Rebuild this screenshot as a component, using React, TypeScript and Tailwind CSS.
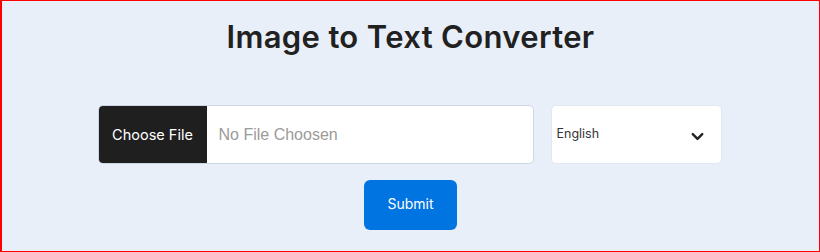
import React, { useState } from 'react';
import { ChevronDown } from 'lucide-react';

const App: React.FC = () => {
  const [language, setLanguage] = useState('English');

  return (
    <div className="w-[820px] h-[252px] box-border border border-l-2 border-[#ff0000] bg-[#e9eff8] flex flex-col items-center">
      {/* Title */}
      <h1 className="mt-[16px] text-[31px] leading-[40px] font-semibold text-[#212121] font-['Inter',sans-serif] tracking-[0.35px]">
        Image to Text Converter
      </h1>

      {/* Input row */}
      <div className="mt-[48px] -ml-[2px] flex items-stretch gap-[17px]">
        <div className="w-[436px] h-[59px] flex rounded-[5px] border border-[#cdd6e4] bg-white overflow-hidden">
          <label className="w-[108px] shrink-0 bg-[#1f1f1f] text-white text-[14.5px] flex items-center justify-center font-['Inter',sans-serif] cursor-pointer">
            Choose File
          </label>
          <div className="flex-1 flex items-center pl-[12px] text-[16px] text-[#9a9a9a] font-['Liberation_Sans',sans-serif]">
            No File Choosen
          </div>
        </div>
        <div className="w-[171px] h-[59px] rounded-[5px] border border-[#e2e8f0] bg-white flex items-center justify-between pl-[5px] pr-[14px]">
          <span className="text-[12.5px] text-[#333] font-['Inter',sans-serif]" onClick={() => setLanguage(language)}>
            {language}
          </span>
          <ChevronDown className="w-[19px] h-[19px] text-[#222] mt-[3px]" strokeWidth={3} />
        </div>
      </div>

      {/* Submit */}
      <button className="mt-[16px] w-[93px] h-[50px] rounded-[6px] bg-[#0074e0] text-white text-[14px] font-['Inter',sans-serif] pb-[3px]">
        Submit
      </button>
    </div>
  );
};

export default App;
